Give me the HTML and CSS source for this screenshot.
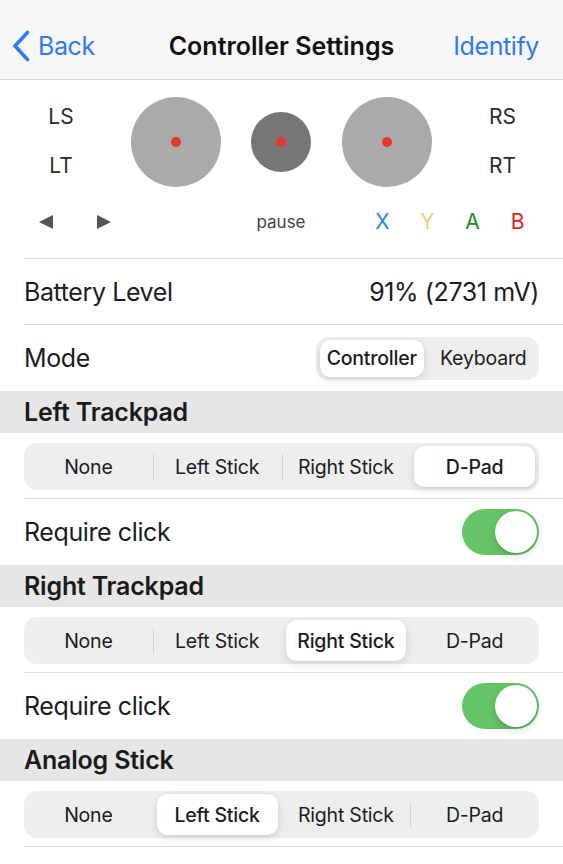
FILE: index.html
```html
<!DOCTYPE html>
<html>
<head>
<meta charset="utf-8">
<link rel="stylesheet" href="styles.css">
</head>
<body>
<div class="nav">
  <div class="nav-back">
    <svg class="chev" width="18" height="32" viewBox="0 0 18 32"><path d="M15.5 2.5 L3 16 L15.5 29.5" fill="none" stroke="#2f7bf5" stroke-width="3.6" stroke-linecap="round" stroke-linejoin="round"/></svg>
    <span>Back</span>
  </div>
  <div class="nav-title">Controller Settings</div>
  <div class="nav-right">Identify</div>
</div>

<div class="controller">
  <div class="ctl-top">
    <div class="trig"><span>LS</span><span>LT</span></div>
    <div class="cell"><div class="stick big"><i class="dot"></i></div></div>
    <div class="cell"><div class="stick small"><i class="dot"></i></div></div>
    <div class="cell"><div class="stick big"><i class="dot"></i></div></div>
    <div class="trig"><span>RS</span><span>RT</span></div>
  </div>
  <div class="ctl-bottom">
    <div class="cell"><svg width="14" height="14" viewBox="0 0 14 14"><polygon points="14,0 14,14 0,7" fill="#555"/></svg></div>
    <div class="cell"><svg width="14" height="14" viewBox="0 0 14 14"><polygon points="0,0 0,14 14,7" fill="#555"/></svg></div>
    <div></div>
    <div class="cell pause">pause</div>
    <div></div>
    <div class="cell btn bx">X</div>
    <div class="cell btn by">Y</div>
    <div class="cell btn ba">A</div>
    <div class="cell btn bb">B</div>
  </div>
</div>
<div class="sep"></div>

<div class="row">
  <span>Battery Level</span>
  <span>91% (2731 mV)</span>
</div>
<div class="sep"></div>
<div class="row last">
  <span>Mode</span>
  <div class="segctl mode">
    <div class="seg on"><span>Controller</span></div>
    <div class="seg"><span>Keyboard</span></div>
  </div>
</div>

<div class="header">Left Trackpad</div>
<div class="row segrow">
  <div class="segctl wide">
    <div class="seg"><span>None</span></div>
    <div class="seg div"><span>Left Stick</span></div>
    <div class="seg div"><span>Right Stick</span></div>
    <div class="seg on"><span>D-Pad</span></div>
  </div>
</div>
<div class="sep"></div>
<div class="row last">
  <span>Require click</span>
  <div class="toggle"><div class="knob"></div></div>
</div>

<div class="header">Right Trackpad</div>
<div class="row segrow">
  <div class="segctl wide">
    <div class="seg"><span>None</span></div>
    <div class="seg div"><span>Left Stick</span></div>
    <div class="seg on"><span>Right Stick</span></div>
    <div class="seg"><span>D-Pad</span></div>
  </div>
</div>
<div class="sep"></div>
<div class="row last">
  <span>Require click</span>
  <div class="toggle"><div class="knob"></div></div>
</div>

<div class="header">Analog Stick</div>
<div class="row segrow">
  <div class="segctl wide">
    <div class="seg"><span>None</span></div>
    <div class="seg on"><span>Left Stick</span></div>
    <div class="seg"><span>Right Stick</span></div>
    <div class="seg div"><span>D-Pad</span></div>
  </div>
</div>
<div class="sep"></div>
</body>
</html>
```

FILE: styles.css
```css
* { box-sizing: border-box; }
html, body { margin: 0; padding: 0; background: #fff; }
body {
  font-family: Inter, "Noto Sans", sans-serif;
  color: #1c1c1e;
  width: 563px;
  overflow: hidden;
}

.nav {
  height: 80px;
  padding-top: 12px;
  background: #f7f7f7;
  border-bottom: 1px solid #d6d6d6;
  display: grid;
  grid-template-columns: 1fr auto 1fr;
  align-items: center;
}
.nav-back {
  display: flex;
  align-items: center;
  padding-left: 12px;
  color: #2f7bf5;
  font-size: 25px;
  letter-spacing: -0.4px;
}
.chev { margin-right: 8px; margin-top: 1px; }
.nav-title {
  font-size: 25px;
  font-weight: 600;
  letter-spacing: 0;
  color: #111;
}
.nav-right {
  justify-self: end;
  padding-right: 24px;
  color: #2f7bf5;
  font-size: 25px;
  letter-spacing: -0.4px;
}

.controller {
  padding-top: 17px;
  padding-bottom: 25px;
}
.ctl-top {
  display: grid;
  grid-template-columns: 122px 108px 102px 110px 121px;
  height: 90px;
  align-items: center;
}
.cell { display: flex; justify-content: center; align-items: center; }
.trig {
  display: flex;
  flex-direction: column;
  align-items: center;
  gap: 25px;
  font-size: 21px;
  line-height: 24px;
  color: #2b2b2b;
  margin-top: -2px;
}
.stick {
  border-radius: 50%;
  display: flex;
  align-items: center;
  justify-content: center;
}
.stick.big { width: 90px; height: 90px; background: #aaaaaa; }
.stick.small { width: 60px; height: 60px; background: #767676; }
.dot {
  width: 10px; height: 10px;
  border-radius: 50%;
  background: #e8352b;
  display: block;
}
.ctl-bottom {
  margin-top: 22px;
  padding-left: 17px;
  display: grid;
  grid-template-columns: 58px 58px 118px 60px 49px 45px 45px 45px 45px;
  height: 24px;
  align-items: center;
}
.pause { font-size: 17px; color: #444; }
.btn { font-size: 21px; }
.bx { color: #1f86f2; }
.by { color: #f6cb72; }
.ba { color: #1d8b1d; }
.bb { color: #e5211d; }

.sep {
  height: 1px;
  margin-left: 24px;
  background: #dedede;
}

.row {
  height: 65px;
  padding: 0 24px;
  display: flex;
  align-items: center;
  justify-content: space-between;
  font-size: 25px;
  letter-spacing: -0.4px;
}
.row.last { height: 66px; }
.row.segrow { align-items: flex-start; padding-top: 10px; }

.header {
  height: 42px;
  background: #e6e6e6;
  padding: 0 24px;
  display: flex;
  align-items: center;
  font-size: 25px;
  font-weight: 600;
  letter-spacing: -0.2px;
  color: #1a1a1a;
}

.segctl {
  display: flex;
  background: #eeeeef;
  border-radius: 13px;
  letter-spacing: -0.2px;
}
.segctl.wide { width: 515px; height: 47px; }
.segctl.mode { width: 223px; height: 43px; }
.seg {
  flex: 1;
  display: flex;
  padding: 3px 4px;
  font-size: 19.5px;
}
.seg.div {
  background: linear-gradient(#d3d3d6, #d3d3d6) 0 50% / 1px 26px no-repeat;
}
.seg span {
  flex: 1;
  display: flex;
  align-items: center;
  justify-content: center;
  border-radius: 10px;
}
.seg.on span {
  background: #fff;
  font-weight: 500;
  box-shadow: 0 3px 8px rgba(0,0,0,0.12), 0 0 0 0.5px rgba(0,0,0,0.04);
}

.toggle {
  width: 77px;
  height: 46px;
  border-radius: 23px;
  background: #65c466;
  display: flex;
  justify-content: flex-end;
  align-items: center;
  padding: 2px;
}
.knob {
  width: 42px;
  height: 42px;
  border-radius: 50%;
  background: #fff;
  box-shadow: 0 3px 8px rgba(0,0,0,0.15), 0 1px 1px rgba(0,0,0,0.12);
}
```
